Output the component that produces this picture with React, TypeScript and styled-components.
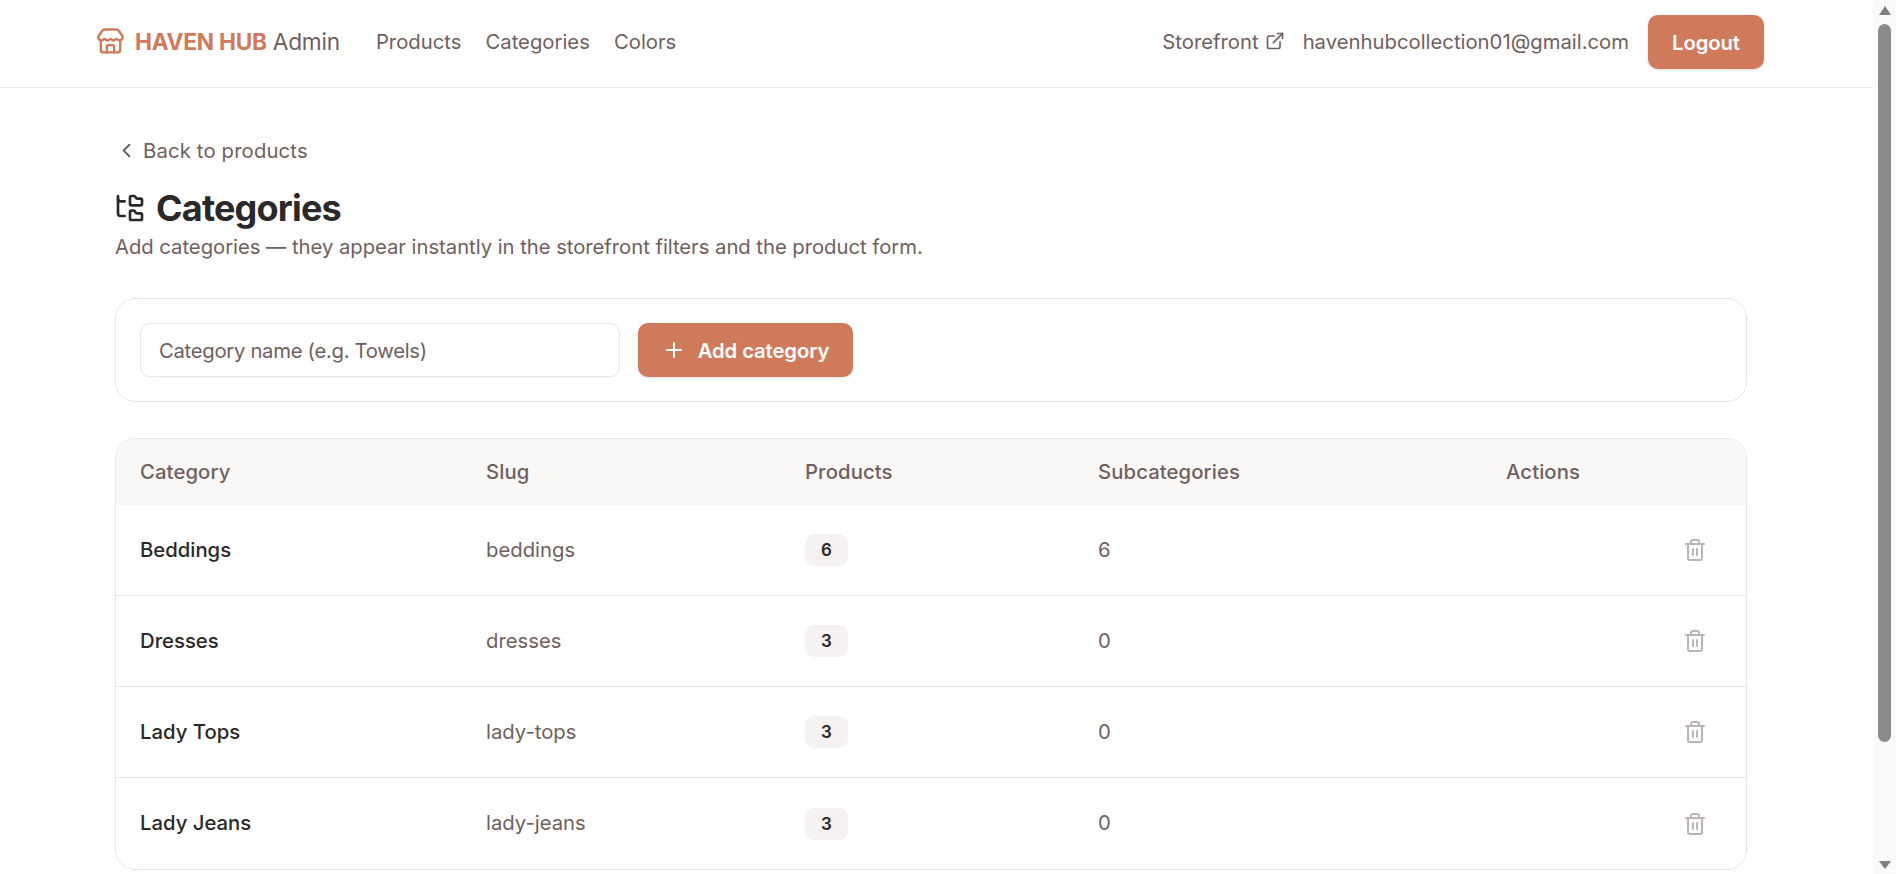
import React from "react";
import styled, { createGlobalStyle } from "styled-components";
import { ChevronLeft, ExternalLink, FolderTree, Plus, Store, Trash2 } from "lucide-react";

const GlobalStyle = createGlobalStyle`
  html, body, #root { height: 100%; }
  body { margin: 0; background: #fff; color: #2a2828; font-family: Inter, "Liberation Sans", sans-serif; overflow: hidden; }
  * { box-sizing: border-box; }
`;

const muted = "#6f6060";
const accent = "#d07a5c";

const Shell = styled.div`display: flex; height: 100vh;`;
const Page = styled.div`flex: 1; min-width: 0; overflow: hidden;`;

const ScrollTrack = styled.div`
  flex: none; width: 23px; background: #fafafa; display: flex; flex-direction: column; align-items: center;
`;
const ScrollArrow = styled.svg`flex: none; width: 12px; height: 24px; fill: #7f7f7f; display: block;`;
const ScrollThumb = styled.div`flex: none; width: 13px; height: 718px; border-radius: 7px; background: #8b8b8b;`;
const ScrollSpacer = styled.div`flex: 1;`;

const Header = styled.header`
  height: 88px; border-bottom: 1px solid #e9e7e7; display: flex; align-items: center;
  justify-content: space-between; padding: 0 109px 3px 97px;
`;
const HeaderGroup = styled.div`display: flex; align-items: center;`;
const Brand = styled.a`
  display: flex; align-items: center; color: ${accent}; font-size: 22.7px; margin-right: 36px;
  letter-spacing: -0.25px; padding-bottom: 2px;
  svg { margin-right: 10px; margin-left: -1px; }
`;
const BrandName = styled.strong`font-weight: 700; margin-right: 6px;`;
const BrandSuffix = styled.span`color: ${muted}; font-weight: 400;`;
const NavLink = styled.a<{ $gap?: number }>`
  color: ${muted}; font-size: 20.3px; margin-right: ${(p) => p.$gap ?? 24}px; padding-bottom: 2px;
  display: inline-flex; align-items: center; gap: 6px;
`;
const Email = styled.span`color: ${muted}; font-size: 20.3px; margin-right: 19px; padding-bottom: 2px;`;
const PrimaryButton = styled.button<{ $width: number }>`
  height: 54px; border: 0; border-radius: 10px; background: ${accent}; color: #fff; font: 600 20.3px Inter, sans-serif;
  letter-spacing: -0.1px; display: inline-flex; align-items: center; justify-content: center; gap: 12px;
  box-shadow: 0 1px 3px rgba(0,0,0,.14); padding: 0;
  width: ${(p) => p.$width}px;
`;

const Main = styled.main`padding: 46px 126px 0 115px;`;
const BackLink = styled.a`
  display: flex; align-items: center; height: 32px; color: ${muted}; font-size: 20.3px; letter-spacing: 0.15px;
  gap: 5px;
`;
const TitleRow = styled.div`display: flex; align-items: center; gap: 10px; margin-top: 19px; height: 46px; svg { margin-left: -1px; }`;
const Title = styled.h1`margin: 0; font-size: 36px; font-weight: 700; letter-spacing: -0.8px; color: #2a2828;`;
const Subtitle = styled.p`margin: 2px 0 0; font-size: 20.3px; line-height: 28px; color: ${muted}; letter-spacing: -0.04px;`;

const AddCard = styled.form`
  margin-top: 37px; height: 104px; border: 1px solid #eee4e6; border-radius: 20px; padding: 24px;
  display: flex; gap: 18px;
`;
const NameInput = styled.input`
  width: 480px; height: 54px; border: 1px solid #eee4e6; border-radius: 10px; padding: 0 18px;
  font: 400 20.3px Inter, sans-serif; letter-spacing: -0.3px; outline: none; box-shadow: 0 1px 2px rgba(0,0,0,.03);
  &::placeholder { color: ${muted}; opacity: 1; }
`;

const Table = styled.section`
  margin-top: 36px; border: 1px solid #eee4e6; border-radius: 20px; overflow: hidden;
`;
const Row = styled.div`
  display: grid; grid-template-columns: 346px 319px 293px 408px 1fr; padding: 0 24px; align-items: center;
`;
const HeadRow = styled(Row)`height: 66px; background: #faf8f7;`;
const BodyRow = styled(Row)`height: 91px; border-bottom: 1px solid #eee4e6; &:last-child { border-bottom: 0; }`;
const HeadCell = styled.div`font-size: 20.3px; font-weight: 500; color: ${muted}; letter-spacing: 0.1px; padding-bottom: 2px;`;
const NameCell = styled.div`font-size: 20.3px; font-weight: 500; color: #2a2828; padding-bottom: 2px;`;
const SlugCell = styled.div`font-size: 20.3px; color: ${muted}; padding-bottom: 2px;`;
const Badge = styled.span`
  display: inline-flex; align-items: center; justify-content: center; width: 43px; height: 32px; border-radius: 9px;
  background: #f6f2f1; color: #2a2828; font-size: 17px; font-weight: 600;
`;
const BadgeCell = styled.div`display: flex;`;
const DeleteButton = styled.button`
  justify-self: end; border: 0; background: none; padding: 0; margin-right: 15px; width: 24px; height: 24px; color: #bdb3b5;
  display: flex; align-items: center; justify-content: center;
`;

const rows = [
  { name: "Beddings", slug: "beddings", products: 6, subs: 6 },
  { name: "Dresses", slug: "dresses", products: 3, subs: 0 },
  { name: "Lady Tops", slug: "lady-tops", products: 3, subs: 0 },
  { name: "Lady Jeans", slug: "lady-jeans", products: 3, subs: 0 },
];

export default function App() {
  return (
    <Shell>
      <GlobalStyle />
      <Page>
        <Header>
          <HeaderGroup>
            <Brand>
              <Store size={29} strokeWidth={2} />
              <BrandName>HAVEN HUB</BrandName>
              <BrandSuffix>Admin</BrandSuffix>
            </Brand>
            <NavLink>Products</NavLink>
            <NavLink>Categories</NavLink>
            <NavLink>Colors</NavLink>
          </HeaderGroup>
          <HeaderGroup>
            <NavLink $gap={18}>Storefront <ExternalLink size={20} strokeWidth={2} /></NavLink>
            <Email>havenhubcollection01@gmail.com</Email>
            <PrimaryButton $width={116}>Logout</PrimaryButton>
          </HeaderGroup>
        </Header>
        <Main>
          <BackLink><ChevronLeft size={23} strokeWidth={2} />Back to products</BackLink>
          <TitleRow>
            <FolderTree size={32} strokeWidth={2} />
            <Title>Categories</Title>
          </TitleRow>
          <Subtitle>Add categories — they appear instantly in the storefront filters and the product form.</Subtitle>
          <AddCard>
            <NameInput placeholder="Category name (e.g. Towels)" />
            <PrimaryButton $width={215} type="button"><Plus size={24} strokeWidth={2} />Add category</PrimaryButton>
          </AddCard>
          <Table>
            <HeadRow>
              <HeadCell>Category</HeadCell>
              <HeadCell>Slug</HeadCell>
              <HeadCell>Products</HeadCell>
              <HeadCell>Subcategories</HeadCell>
              <HeadCell>Actions</HeadCell>
            </HeadRow>
            {rows.map((r) => (
              <BodyRow key={r.slug}>
                <NameCell>{r.name}</NameCell>
                <SlugCell>{r.slug}</SlugCell>
                <BadgeCell><Badge>{r.products}</Badge></BadgeCell>
                <SlugCell>{r.subs}</SlugCell>
                <DeleteButton type="button" aria-label={`Delete ${r.name}`}><Trash2 size={24} strokeWidth={2} /></DeleteButton>
              </BodyRow>
            ))}
          </Table>
        </Main>
      </Page>
      <ScrollTrack>
        <ScrollArrow viewBox="0 0 12 24"><polygon points="6,6 12,15 0,15" /></ScrollArrow>
        <ScrollThumb />
        <ScrollSpacer />
        <ScrollArrow viewBox="0 0 12 24"><polygon points="0,11 12,11 6,19" /></ScrollArrow>
      </ScrollTrack>
    </Shell>
  );
}
